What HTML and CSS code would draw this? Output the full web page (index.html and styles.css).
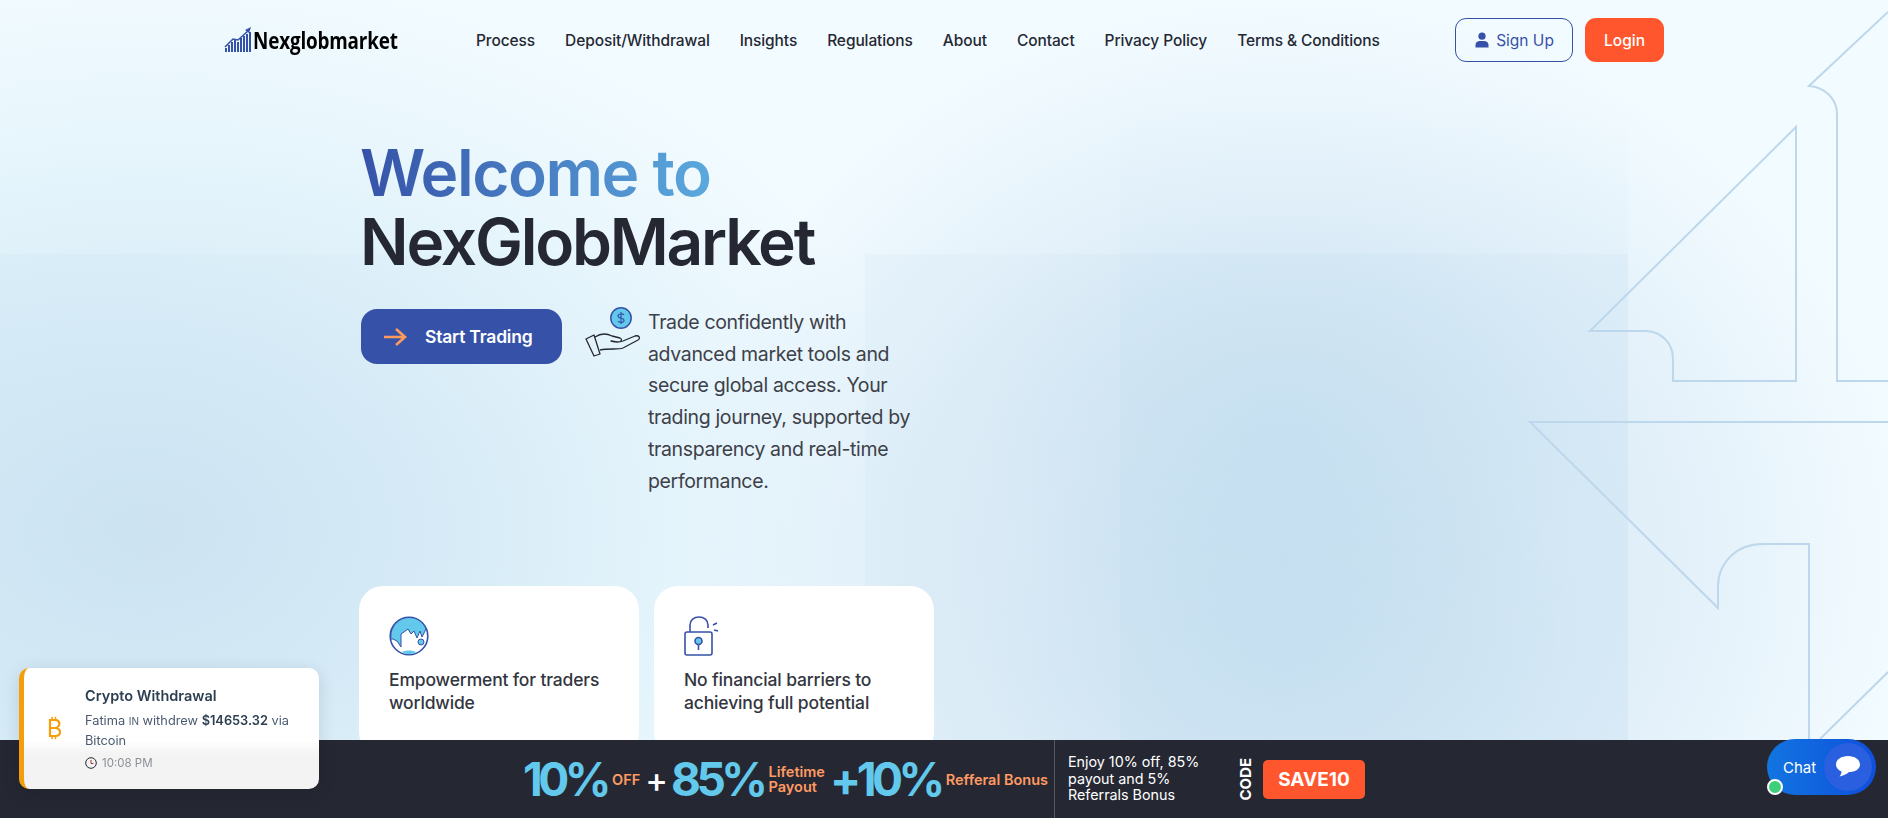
FILE: index.html
```html
<!DOCTYPE html>
<html>
<head>
    <title>NexGlobMarket</title>
    <link rel="stylesheet" href="styles.css">
</head>
<body>
  <div class="glow glow-left"></div>
  <div class="glow glow-right"></div>
  <div class="band band-left"></div>
  <div class="band band-mid"></div>
  <div class="band band-right"></div>

  <svg class="arrows" viewBox="0 0 1888 818" fill="none">
    <path d="M1796 127V381H1673V359C1673 343 1661 331 1645 331H1590Z"/>
    <path d="M1888 12L1809 86C1825 87 1837 99 1837 114V381H1888"/>
    <path d="M1888 422H1530L1718 608V587C1718 562 1737 544 1763 544H1809V740"/>
    <path d="M1888 672L1820 739"/>
  </svg>

  <header class="topbar">
    <a class="logo">
      <svg width="29" height="26" viewBox="0 0 29 26">
        <path d="M1 25V21H3V25ZM4 25V18H6V25ZM7 25V15H9V25ZM10 25V13H12V25ZM13 25V15H15V25ZM16 25V11H18V25ZM19 25V9H21V25ZM22 25V7H24V25ZM25 25V5H27V25Z" fill="#3652a8"/>
        <path d="M1 20L9 12L14 13L24 4" stroke="#3652a8" stroke-width="1.6" fill="none"/>
        <path d="M21 3L27 0L25 6Z" fill="#3652a8"/>
      </svg>
      <span class="logo-text">Nexglobmarket</span>
    </a>
    <nav class="menu">
      <a>Process</a>
      <a>Deposit/Withdrawal</a>
      <a>Insights</a>
      <a>Regulations</a>
      <a>About</a>
      <a>Contact</a>
      <a>Privacy Policy</a>
      <a>Terms &amp; Conditions</a>
    </nav>
    <div class="auth">
      <a class="btn-signup">
        <svg width="16" height="16" viewBox="0 0 16 16" fill="#3652a8"><circle cx="8" cy="4.2" r="3.6"/><path d="M1.5 15.5V13C1.5 10.500 3.500 9 6 9H10C12.500 9 14.500 10.500 14.500 13V15.500Z"/></svg>
        Sign Up
      </a>
      <a class="btn-login">Login</a>
    </div>
  </header>

  <main class="hero">
    <h1><span class="grad">Welcome to</span><span class="name">NexGlobMarket</span></h1>

    <div class="hero-row">
      <a class="btn-start">
        <svg width="24" height="20" viewBox="0 0 24 20" fill="none" stroke="#ff9a5e" stroke-width="2.6"><path d="M1 10H22M13 2L22 10L13 18"/></svg>
        Start Trading
      </a>
      <svg class="hand" width="56" height="52" viewBox="0 0 56 52" fill="none" stroke="#252833" stroke-width="1.3" stroke-linejoin="round">
        <circle cx="36" cy="11" r="10.2" fill="#62c9ec" stroke="#3652a8" stroke-width="1.5"/>
        <path d="M36 5V17M39 8C38 6.500 33 6.500 33 9C33 12 39 10 39 13.500C39 16 34 16 33 14" stroke="#3652a8" stroke-width="1.2"/>
        <path d="M1 32L9 28L15 47L9 49Z"/>
        <path d="M10 30C16 26 21 26 27 29L35 31C38 32 36 36 32 35L26 34C30 35 35 35 38 34L50 29C54 28 56 31 53 33L38 41C33 43 25 41 15 43"/>
      </svg>
      <p class="lead">Trade confidently with advanced market tools and secure global access. Your trading journey, supported by transparency and real-time performance.</p>
    </div>

    <div class="cards">
      <div class="card">
        <svg width="40" height="40" viewBox="0 0 40 40">
          <circle cx="20" cy="20" r="18.800" fill="#fff" stroke="#3652a8" stroke-width="1.6"/>
          <path d="M2 17C4 8 11 1.500 20 1.500C28 1.500 34 6 37 13L33 21L31 15L28 22L25 15L22 18L19 13L15 16L12 18L12 31L8 25L4 23L1.800 23Z" fill="#62c9ec" stroke="#3652a8" stroke-width="1"/>
          <circle cx="32" cy="26" r="3" fill="#62c9ec" stroke="#3652a8" stroke-width="1"/>
          <path d="M13 36C17 34 23 34 27 36C23 39 17 39 13 36Z" fill="#62c9ec"/>
        </svg>
        <h3>Empowerment for traders worldwide</h3>
      </div>
      <div class="card">
        <svg width="38" height="40" viewBox="0 0 38 40" fill="none" stroke="#3652a8" stroke-width="1.6">
          <rect x="1" y="16" width="27" height="23" rx="2"/>
          <path d="M6 16V9C6 4 10 1 15 1C20 1 24 4 24 9V12"/>
          <path d="M29 9L33 7M30 14L34 15"/>
          <circle cx="14.500" cy="25" r="3.500" fill="#62c9ec"/>
          <path d="M14.500 28V34"/>
        </svg>
        <h3>No financial barriers to achieving full potential</h3>
      </div>
    </div>
  </main>

  <div class="promo">
    <div class="promo-deal">
      <b class="big">10%</b><span class="tag">OFF</span>
      <b class="plus">+</b>
      <b class="big">85%</b><span class="tag">Lifetime<br>Payout</span>
      <b class="big">+10%</b><span class="tag">Refferal Bonus</span>
    </div>
    <div class="promo-note">Enjoy 10% off, 85% payout and 5% Referrals Bonus</div>
    <div class="promo-code">
      <span class="code-label">CODE</span>
      <span class="code-box">SAVE10</span>
    </div>
  </div>

  <div class="toast">
    <div class="toast-icon">₿</div>
    <div>
      <div class="toast-title">Crypto Withdrawal</div>
      <div class="toast-msg">Fatima <span class="flag">in</span> withdrew <b>$14653.32</b> via<br>Bitcoin</div>
      <div class="toast-time">
        <svg width="12" height="12" viewBox="0 0 12 12" fill="none" stroke="#252833"><circle cx="6" cy="6" r="5.300"/><path d="M6 3V6.500H8.500" stroke="#a33"/></svg>
        10:08 PM
      </div>
    </div>
  </div>

  <a class="chat">
    <span>Chat</span>
    <span class="chat-circle">
      <svg width="24" height="22" viewBox="0 0 24 22" fill="#fff"><path d="M12 0C18.600 0 24 3.500 24 8.500C24 13.500 18.600 16 13 16C11 18 7 20 3.500 20.500C5 19 5.500 17 5.500 15.500C2 14 0 11.500 0 8.500C0 3.500 5.400 0 12 0Z"/></svg>
    </span>
    <i class="online"></i>
  </a>
</body>
</html>
```

FILE: styles.css
```css
* {
    box-sizing: border-box;
}

body {
    margin: 0;
    height: 818px;
    overflow: hidden;
    position: relative;
    font-family: Inter, "Noto Sans", sans-serif;
    background-color: #f2fbff;
    color: #252833;
}

a {
    text-decoration: none;
}

/* background */
.glow,
.band {
    position: absolute;
    z-index: -2;
}

.glow-left {
    left: 0;
    top: 0;
    width: 1100px;
    height: 818px;
    background: radial-gradient(ellipse 800px 560px at 150px 530px, #cfe4f2 0%, #d8ecf7 35%, #e6f5fc 68%, rgba(242, 251, 255, 0) 100%);
}

.glow-right {
    left: 700px;
    top: 0;
    width: 1188px;
    height: 818px;
    background:
        radial-gradient(ellipse 300px 230px at 584px 439px, rgba(201, 225, 241, 0.7) 0%, rgba(201, 225, 241, 0) 100%),
        radial-gradient(ellipse 300px 230px at 584px 643px, rgba(201, 225, 241, 0.7) 0%, rgba(201, 225, 241, 0) 100%),
        radial-gradient(ellipse 620px 560px at 584px 560px, #d3e6f4 0%, rgba(222, 237, 248, 0.85) 60%, rgba(242, 251, 255, 0) 100%);
}

.band-left {
    left: 0;
    top: 254px;
    width: 865px;
    height: 564px;
    background: linear-gradient(90deg, rgba(170, 210, 235, 0.1), rgba(170, 210, 235, 0));
}

.band-mid {
    left: 865px;
    top: 254px;
    width: 763px;
    height: 564px;
    background: rgba(170, 210, 235, 0.08);
}

.band-right {
    left: 1120px;
    top: 100px;
    width: 508px;
    height: 718px;
    background: linear-gradient(rgba(170, 210, 235, 0), rgba(170, 210, 235, 0.1) 200px);
}

.arrows {
    position: absolute;
    left: 0;
    top: 0;
    width: 1888px;
    height: 818px;
    z-index: -1;
}

.arrows path {
    stroke: #bdd7ec;
    stroke-width: 2;
}

/* header */
.topbar {
    display: flex;
    align-items: center;
    height: 44px;
    margin: 18px 0 0 224px;
    width: 1440px;
}

.logo {
    display: flex;
    align-items: center;
    width: 252px;
    color: #000;
}

.logo-text {
    font-family: "Open Sans", sans-serif;
    font-weight: 700;
    font-size: 23px;
    letter-spacing: -0.2px;
    transform: scaleX(0.82);
    transform-origin: left center;
}

.menu {
    display: flex;
    gap: 30px;
    font-size: 15.500px;
    font-weight: 500;
    letter-spacing: -0.1px;
    white-space: nowrap;
}

.menu a {
    color: #252833;
}

.auth {
    display: flex;
    gap: 12px;
    margin-left: auto;
}

.btn-signup,
.btn-login {
    display: flex;
    align-items: center;
    justify-content: center;
    height: 44px;
    border-radius: 11px;
    font-size: 15.500px;
}

.btn-signup {
    width: 118px;
    gap: 6px;
    border: 1px solid #3652a8;
    color: #3652a8;
}

.btn-login {
    width: 79px;
    background: #ff562d;
    color: #fff;
    font-weight: 500;
}

/* hero */
.hero {
    margin: 0 0 0 360px;
}

.hero h1 {
    margin: 76px 0 0;
    font-size: 64px;
    line-height: 69px;
    font-weight: 570;
    letter-spacing: -1.500px;
}

.name {
    display: block;
    letter-spacing: -2.200px;
}

.grad {
    display: block;
    width: fit-content;
    background: linear-gradient(90deg, #3652a8, #5aa9dd);
    -webkit-background-clip: text;
    background-clip: text;
    color: transparent;
}

.hero-row {
    display: flex;
    align-items: flex-start;
    margin-top: 33px;
}

.btn-start {
    display: flex;
    align-items: center;
    gap: 18px;
    width: 201px;
    height: 55px;
    margin-left: 1px;
    padding-left: 22px;
    border-radius: 16px;
    background: #3652a8;
    color: #fff;
    font-size: 17.500px;
    font-weight: 600;
    letter-spacing: -0.2px;
}

.hand {
    margin: -2px 0 0 23px;
}

.lead {
    width: 285px;
    margin: -2px 0 0 7px;
    font-size: 19.500px;
    line-height: 31.700px;
    color: #3d4048;
    letter-spacing: -0.350px;
}

.cards {
    display: flex;
    gap: 15px;
    margin-left: -1px;
    margin-top: 89px;
}

.card {
    width: 280px;
    height: 170px;
    padding: 30px;
    border-radius: 24px;
    background: #fff;
}

.card svg {
    display: block;
}

.card h3 {
    margin: 12px 0 0;
    font-size: 17.500px;
    line-height: 23px;
    font-weight: 500;
    color: #333640;
    letter-spacing: -0.150px;
}

/* bottom promo bar */
.promo {
    position: fixed;
    left: 0;
    right: 0;
    bottom: 0;
    height: 78px;
    display: flex;
    align-items: stretch;
    padding-left: 523px;
    background: #252833;
    color: #fff;
}

.promo-deal {
    display: flex;
    align-items: center;
    width: 532px;
    border-right: 1px solid #55585f;
    white-space: nowrap;
}

.big {
    font-size: 46px;
    font-weight: 650;
    letter-spacing: -4.500px;
    color: #62c9ec;
}

.tag {
    margin: 0 5px 0 5px;
    font-size: 14.500px;
    line-height: 15px;
    font-weight: 600;
    color: #ff9a62;
}

.plus {
    margin: 0 3px 0 0;
    font-size: 34px;
    font-weight: 500;
}

.promo-note {
    width: 168px;
    padding-right: 32px;
    margin-left: 13px;
    align-self: center;
    font-size: 14.300px;
    line-height: 16.500px;
}

.promo-code {
    display: flex;
    align-items: center;
    gap: 8px;
}

.code-label {
    writing-mode: vertical-rl;
    transform: rotate(180deg);
    font-size: 15px;
    font-weight: 700;
}

.code-box {
    width: 102px;
    height: 39px;
    line-height: 39px;
    text-align: center;
    border-radius: 5px;
    background: #ff562d;
    font-size: 19px;
    font-weight: 700;
}

/* withdrawal toast */
.toast {
    position: fixed;
    left: 19px;
    top: 668px;
    width: 300px;
    height: 121px;
    display: flex;
    align-items: center;
    padding: 0 16px 0 0;
    border-left: 5px solid #f59e0b;
    border-radius: 10px;
    background: linear-gradient(#fff 0, #fff 60%, #f3f3f3 72%);
    box-shadow: 0 4px 18px rgba(0, 0, 0, 0.12);
}

.toast-icon {
    width: 61px;
    flex: none;
    text-align: center;
    font-size: 24px;
    color: #f59e0b;
}

.toast-title {
    font-size: 14.500px;
    font-weight: 600;
    color: #2c3e50;
}

.toast-msg {
    margin-top: 7px;
    font-size: 12.800px;
    line-height: 19px;
    color: #4a5b70;
}

.toast-msg b {
    color: #2c3e50;
    font-weight: 600;
}

.flag {
    font-size: 10px;
    text-transform: uppercase;
}

.toast-time {
    display: flex;
    align-items: center;
    gap: 5px;
    margin-top: 6px;
    font-size: 11.500px;
    color: #8a9097;
}

/* chat launcher */
.chat {
    position: fixed;
    left: 1767px;
    top: 739px;
    width: 109px;
    height: 56px;
    display: flex;
    align-items: center;
    justify-content: space-between;
    padding: 0 4px 0 16px;
    border-radius: 28px;
    background: linear-gradient(90deg, #1275e0, #0e4fdc);
    color: #fff;
    font-size: 15px;
}

.chat-circle {
    display: flex;
    align-items: center;
    justify-content: center;
    width: 48px;
    height: 48px;
    border-radius: 50%;
    background: #2a5fe0;
}

.online {
    position: absolute;
    left: 0;
    top: 40px;
    width: 16px;
    height: 16px;
    border-radius: 50%;
    border: 2px solid #fff;
    background: #3ecf7a;
}
```
